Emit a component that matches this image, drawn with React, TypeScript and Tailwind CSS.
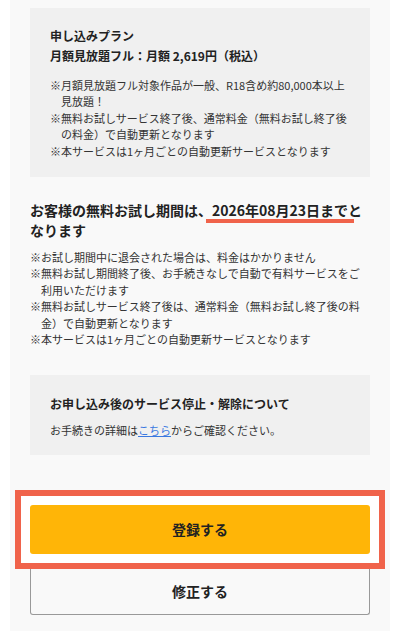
import React from 'react';

const planNotes = [
  '※月額見放題フル対象作品が一般、R18含め約80,000本以上見放題！',
  '※無料お試しサービス終了後、通常料金（無料お試し終了後の料金）で自動更新となります',
  '※本サービスは1ヶ月ごとの自動更新サービスとなります',
];

const trialNotes = [
  '※お試し期間中に退会された場合は、料金はかかりません',
  '※無料お試し期間終了後、お手続きなしで自動で有料サービスをご利用いただけます',
  '※無料お試しサービス終了後は、通常料金（無料お試し終了後の料金）で自動更新となります',
  '※本サービスは1ヶ月ごとの自動更新サービスとなります',
];

const NoteList = ({ items }: { items: string[] }) => (
  <ul className="text-[11px] leading-[16.4px] text-[#333]">
    {items.map((t, i) => (
      <li key={i} className="pl-[1em] indent-[-1em]">
        {t}
      </li>
    ))}
  </ul>
);

export default function App() {
  return (
    <div className="w-[400px] min-h-[631px] bg-white px-[10px] font-['Noto_Sans_CJK_JP','Noto_Sans',sans-serif] text-[#222]">
      <div className="min-h-[631px] bg-[#f9f9f9] pt-2 pb-[18px]">
        {/* プラン概要 */}
        <section className="mx-5 bg-[#f0f0f0] px-5 pt-[18px] pb-[18px]">
          <p className="text-[12px] font-bold leading-[20px]">申し込みプラン</p>
          <p className="text-[12px] font-bold leading-[20px]">月額見放題フル：月額 2,619円（税込）</p>
          <div className="mt-[11px]">
            <NoteList items={planNotes} />
          </div>
        </section>

        {/* 無料お試し期間 */}
        <div className="mx-5 mt-[23px]">
          <h2 className="text-[14px] font-bold leading-[20px]">
            お客様の無料お試し期間は、
            <span className="relative">
              2026年08月23日までと
              <span className="absolute left-[-6px] right-[8px] bottom-[-3px] h-[4px] bg-[#f0634b]" />
            </span>
            なります
          </h2>
          <div className="mt-[9px]">
            <NoteList items={trialNotes} />
          </div>
        </div>

        {/* サービス停止・解除 */}
        <section className="mx-5 mt-[28px] bg-[#f0f0f0] px-5 pt-[19px] pb-[16px]">
          <p className="text-[12px] font-bold leading-[20px]">お申し込み後のサービス停止・解除について</p>
          <p className="mt-[8px] text-[11px] leading-[16.5px] text-[#333]">
            お手続きの詳細は
            <a href="#" className="text-[#3a78e0] underline">
              こちら
            </a>
            からご確認ください。
          </p>
        </section>

        {/* ボタン */}
        <div className="mx-[5px] mt-[35px] border-[6px] border-[#f0634b] bg-white p-[9px]">
          <button className="flex h-[49px] w-full items-center justify-center rounded-[3px] bg-[#ffb507] text-[14px] font-bold text-[#222]">
            登録する
          </button>
        </div>
        <button className="mx-5 flex h-[46px] w-[340px] items-center justify-center rounded-b-[3px] border border-t-0 border-[#999] text-[14px] font-bold text-[#222]">
          修正する
        </button>
      </div>
    </div>
  );
}
